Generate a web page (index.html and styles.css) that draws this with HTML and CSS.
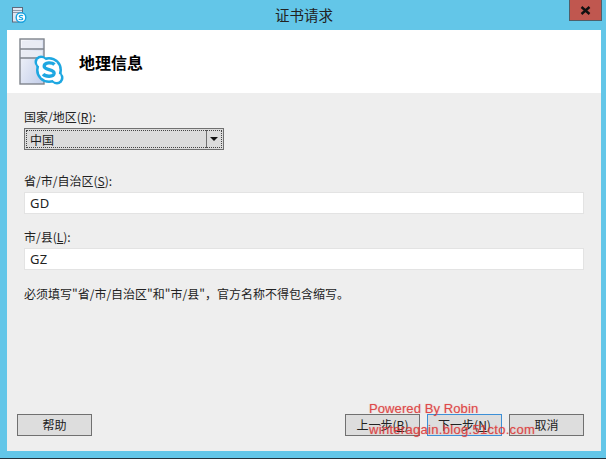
FILE: index.html
```html
<!DOCTYPE html>
<html lang="zh-CN">
<head>
<meta charset="utf-8">
<title>证书请求</title>
<link rel="stylesheet" href="styles.css">
</head>
<body>
<div class="window">
  <div class="titlebar">
    <svg class="app-icon" width="16" height="18" viewBox="0 0 16 18">
      <rect x="1.500" y="1.500" width="10" height="14.500" fill="#dfe6f2" stroke="#5d6a7c"/>
      <path d="M2 4.500h9M2 6.500h9" stroke="#8d98a8"/>
      <circle cx="10" cy="11.500" r="4.800" fill="#fff" stroke="#19a3e0" stroke-width="1.400"/>
      <path d="M12 9.900c-.8-.8-3.600-.9-3.800.5-.1 1.500 3.800.9 3.600 2.400-.2 1.200-3 1.200-4 .3" fill="none" stroke="#19a3e0" stroke-width="1.200"/>
    </svg>
    <div class="title">证书请求</div>
    <div class="close"><svg width="13" height="9" viewBox="0 0 13 9"><path d="M2.500 1 10.500 8M10.500 1 2.500 8" stroke="#111" stroke-width="2.400"/></svg></div>
  </div>
  <div class="client">
    <header class="banner">
      <svg class="logo" width="46" height="48" viewBox="0 0 46 48">
        <defs>
          <linearGradient id="srv" x1="0" y1="0" x2="1" y2="1">
            <stop offset="0" stop-color="#f8f9fc"/>
            <stop offset="1" stop-color="#c2cde9"/>
          </linearGradient>
        </defs>
        <rect x="1" y="1" width="24" height="45" fill="url(#srv)" stroke="#7f848c" stroke-width="1.400"/>
        <path d="M1 11h24M1 20h24" stroke="#7f848c" stroke-width="1.400"/>
        <path d="M3 3h20v7H3zM3 13h20v6H3z" fill="#e9ecf4"/>
        <g fill="#1ea7e1">
          <circle cx="30" cy="32" r="13"/>
          <circle cx="22" cy="24" r="6.500"/>
          <circle cx="38" cy="40" r="6.500"/>
        </g>
        <g fill="#fff">
          <circle cx="30" cy="32" r="10.500"/>
          <circle cx="22.500" cy="24.500" r="4.500"/>
          <circle cx="37.500" cy="39.500" r="4.500"/>
        </g>
        <path d="M35.500 26.500c-2.300-2.200-10-2.700-10.300 1.600-.3 4.400 10.300 2.600 9.900 7.300-.4 3.700-8.600 3.500-11 .8" fill="none" stroke="#1ea7e1" stroke-width="3.400"/>
      </svg>
      <h1 class="heading">地理信息</h1>
    </header>
    <main class="form">
      <label class="label first">国家/地区(<u>R</u>):</label>
      <div class="select">
        <div class="select-value"><span>中国</span></div>
        <div class="select-btn"><svg width="8" height="4" viewBox="0 0 8 4"><path d="M0 0h8L4 4z" fill="#111"/></svg></div>
      </div>
      <label class="label second">省/市/自治区(<u>S</u>):</label>
      <div class="input">GD</div>
      <label class="label third">市/县(<u>L</u>):</label>
      <div class="input">GZ</div>
      <p class="note">必须填写"省/市/自治区"和"市/县"，官方名称不得包含缩写。</p>
    </main>
    <footer class="actions">
      <button class="btn">帮助</button>
      <div class="nav">
        <button class="btn">上一步(<u>B</u>)</button>
        <button class="btn primary">下一步(<u>N</u>)</button>
        <button class="btn">取消</button>
      </div>
    </footer>
  </div>
  <div class="watermark">
    <div class="wm-top">Powered By Robin</div>
    <div class="wm-bottom">winteragain.blog.51cto.com</div>
  </div>
</div>
</body>
</html>
```
FILE: styles.css
```css
* { box-sizing: border-box; }
html, body { margin: 0; padding: 0; }
body { width: 606px; height: 459px; overflow: hidden; background: #23323c; font-family: "Noto Sans CJK SC", "Liberation Sans", sans-serif; color: #1a1a1a; }
.window { position: relative; width: 606px; height: 458px; background: #63c6e8; padding: 0 5px 7px 7px; display: flex; flex-direction: column; }
.titlebar { height: 30px; flex: none; display: flex; position: relative; }
.app-icon { position: absolute; left: 4px; top: 6px; }
.title { flex: 1; text-align: center; font-size: 14.500px; line-height: 29px; color: #222; }
.close { position: absolute; right: -1px; top: 0; width: 33px; height: 21px; background: #c0574f; border: 1px solid #4d5f6b; border-top: 0; display: flex; align-items: center; justify-content: center; }
.client { flex: 1; background: #eeeeee; display: flex; flex-direction: column; }
.banner { height: 63px; flex: none; background: #fff; display: flex; align-items: center; padding: 8px 0 8px 12px; }
.logo { flex: none; }
.heading { margin: 0 0 0 14px; font-size: 16px; line-height: 20px; font-weight: 700; color: #000; }
.form { flex: 1; padding: 0 17px; display: flex; flex-direction: column; }
.label { font-size: 12px; line-height: 16px; height: 16px; color: #222; }
.label.first { margin-top: 16px; margin-bottom: 3px; }
.label.second { margin-top: 23px; margin-bottom: 3px; }
.label.third { margin-top: 15px; margin-bottom: 3px; }
.select { width: 200px; height: 22px; background: #dcdcdc; border: 1px solid #707070; display: flex; padding: 1px; }
.select-value { flex: 1; border: 1px dotted #444; border-right: 0; display: flex; align-items: center; padding-left: 3px; font-size: 12px; }
.select-btn { width: 16px; border: 1px dotted #444; border-left: 1px solid #707070; display: flex; align-items: center; justify-content: center; }
.input { width: 560px; height: 22px; background: #fff; border: 1px solid #e3e3e3; font-family: "Noto Sans", "Liberation Sans", sans-serif; font-size: 13px; line-height: 21px; padding-left: 5px; color: #222; letter-spacing: .2px; }
.note { margin: 16px 0 0; font-size: 12px; line-height: 16px; color: #222; }
.actions { flex: none; display: flex; justify-content: space-between; padding: 0 17px 15px 10px; }
.nav { display: flex; gap: 7px; }
.btn { width: 75px; height: 22px; padding: 0; background: #dddddd; border: 1px solid #707070; font-family: inherit; font-size: 12px; line-height: 18px; color: #222; white-space: nowrap; }
.btn.primary { border-color: #3c8fd6; }
.watermark { position: absolute; left: 369px; top: 401px; font-family: "Liberation Sans", sans-serif; color: rgba(220, 50, 50, .8); pointer-events: none; text-shadow: 0 0 1px rgba(220, 50, 50, .5); }
.wm-top { font-size: 13px; line-height: 15px; letter-spacing: .1px; }
.wm-bottom { font-size: 13px; line-height: 15px; margin-top: 6px; letter-spacing: .3px; }
```
